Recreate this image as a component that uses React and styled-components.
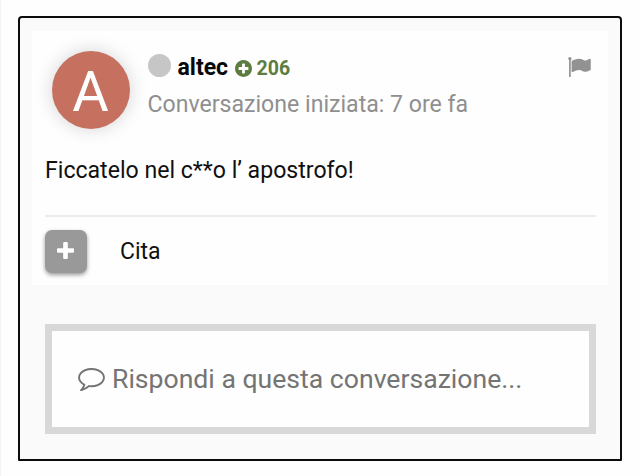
import React from 'react';
import styled, { createGlobalStyle } from 'styled-components';

const GlobalStyle = createGlobalStyle`
  * {
    box-sizing: border-box;
  }
  body {
    margin: 0;
    background: #fefefe;
    font-family: Roboto, 'Liberation Sans', sans-serif;
  }
`;

const Page = styled.main`
  height: 476px;
  padding: 16px 18px 15px 17px;
  border-left: 1px solid #f3f3f3;
`;

const Frame = styled.div`
  width: 604px;
  height: 445px;
  padding: 13px 12px 0;
  border: 2px solid #0c0c0c;
  border-radius: 4px 4px 1px 1px;
  background: #fafafa;
`;

const Card = styled.article`
  height: 254px;
  padding: 19px 12px 0 13px;
  background: #fefefe;
`;

const Header = styled.header`
  display: flex;
  align-items: flex-start;
  height: 80px;
`;

const Avatar = styled.div`
  display: flex;
  align-items: center;
  justify-content: center;
  width: 78px;
  height: 78px;
  margin: 0.5px 18px 0 6.5px;
  padding-top: 4px;
  border-radius: 50%;
  background: #c67060;
  color: #fff;
  font-size: 56px;
  line-height: 1;
  box-shadow: 0 0 18px rgba(0, 0, 0, 0.17);
`;

const Info = styled.div`
  flex: 1;
`;

const NameRow = styled.div`
  display: flex;
  align-items: center;
  height: 34px;
`;

const StatusDot = styled.span`
  width: 23px;
  height: 23px;
  margin: 0 7px 4px 0;
  border-radius: 50%;
  background: #c6c6c6;
`;

const UserName = styled.span`
  color: #080808;
  font-size: 23px;
  font-weight: 700;
`;

const Karma = styled.span`
  display: flex;
  align-items: center;
  gap: 5px;
  margin: 2px 0 0 6.5px;
  color: #5c7c40;
  font-size: 19.5px;
  font-weight: 700;
`;

const StartedAt = styled.div`
  margin-top: 7px;
  color: #8f8f8f;
  font-size: 23.1px;
  line-height: 27px;
  white-space: nowrap;
`;

const FlagButton = styled.button`
  display: flex;
  margin: 7px 5px 0 0;
  padding: 0;
  border: 0;
  background: none;
  color: #929292;
`;

const Message = styled.p`
  margin: 27px 0 0;
  color: #101010;
  font-size: 23.1px;
  line-height: 27px;
`;

const Actions = styled.footer`
  display: flex;
  align-items: center;
  gap: 33px;
  margin-top: 31px;
  padding-top: 13px;
  border-top: 2px solid #ececec;
  color: #101010;
  font-size: 23px;
`;

const VoteButton = styled.button`
  display: flex;
  align-items: center;
  justify-content: center;
  width: 42px;
  height: 43px;
  padding: 0 1px 3px 0;
  border: 0;
  border-radius: 7px;
  background: #999;
  color: #fff;
  box-shadow: 0 2px 4px rgba(0, 0, 0, 0.4);
`;

const ReplyBox = styled.div`
  display: flex;
  align-items: center;
  gap: 7px;
  height: 110px;
  margin: 39px 12px 0 13px;
  padding-left: 26px;
  border: 7px solid #d8d8d8;
  background: #fefefe;
  color: #747474;
  font-size: 26.6px;
  white-space: nowrap;
`;

const ReplyText = styled.span`
  padding-bottom: 2px;
`;

const icons = {
  flag: 'M320 256q0 72-64 110v1266q0 13-9.5 22.5t-22.5 9.5h-64q-13 0-22.5-9.5t-9.5-22.5v-1266q-64-38-64-110 0-53 37.5-90.5t90.5-37.5 90.5 37.5 37.5 90.5zm1472 64v763q0 25-12.5 38.5t-39.5 27.5q-215 116-369 116-61 0-123.5-22t-108.5-48-115.5-48-142.5-22q-192 0-464 146-17 9-33 9-26 0-45-19t-19-45v-742q0-32 31-55 21-14 79-43 236-120 421-120 107 0 200 29t219 88q38 19 88 19 54 0 117.5-21t110-47 88-47 54.5-21q26 0 45 19t19 45z',
  plus: 'M1600 736v192q0 40-28 68t-68 28h-416v416q0 40-28 68t-68 28h-192q-40 0-68-28t-28-68v-416h-416q-40 0-68-28t-28-68v-192q0-40 28-68t68-28h416v-416q0-40 28-68t68-28h192q40 0 68 28t28 68v416h416q40 0 68 28t28 68z',
  plusCircle: 'M1344 960v-128q0-26-19-45t-45-19h-256v-256q0-26-19-45t-45-19h-128q-26 0-45 19t-19 45v256h-256q-26 0-45 19t-19 45v128q0 26 19 45t45 19h256v256q0 26 19 45t45 19h128q26 0 45-19t19-45v-256h256q26 0 45-19t19-45zm320-64q0 209-103 385.5t-279.5 279.5-385.5 103-385.5-103-279.5-279.5-103-385.5 103-385.5 279.5-279.5 385.5-103 385.5 103 279.5 279.5 103 385.5z',
  comment: 'M896 384q-204 0-381.5 69.5t-282 187.5-104.5 255q0 112 71.5 213.5t201.5 175.5l87 50-27 96q-24 91-70 172 152-63 275-171l43-38 57 6q69 8 130 8 204 0 381.5-69.5t282-187.5 104.5-255-104.5-255-282-187.5-381.5-69.5zm896 512q0 174-120 321.5t-326 233-450 85.5q-70 0-145-8-198 175-460 242-49 14-114 22h-5q-15 0-27-10.5t-16-27.5v-1q-3-4-.5-12t2-10 4.5-9.5l6-9 7-8.5 8-9q7-8 31-34.5t34.5-38 31-39.5 32.5-51 27-59 26-76q-157-89-247.5-220t-90.5-281q0-174 120-321.5t326-233 450-85.5 450 85.5 326 233 120 321.5z',
};

const Icon = ({ name, width, height, viewBox }) => (
  <svg width={width} height={height} viewBox={viewBox} fill='currentColor' aria-hidden='true'>
    <path d={icons[name]} />
  </svg>
);

const App = () => {
  return (
    <Page>
      <GlobalStyle />
      <Frame>
        <Card>
          <Header>
            <Avatar>A</Avatar>
            <Info>
              <NameRow>
                <StatusDot />
                <UserName>altec</UserName>
                <Karma>
                  <Icon name='plusCircle' width={17} height={17} viewBox='128 128 1536 1536' />
                  206
                </Karma>
              </NameRow>
              <StartedAt>Conversazione iniziata: 7 ore fa</StartedAt>
            </Info>
            <FlagButton aria-label='Segnala'>
              <Icon name='flag' width={23} height={20} viewBox='64 128 1728 1536' />
            </FlagButton>
          </Header>

          <Message>Ficcatelo nel c**o l’ apostrofo!</Message>

          {/* voto e citazione */}
          <Actions>
            <VoteButton aria-label='Vota'>
              <Icon name='plus' width={17} height={17} viewBox='192 128 1408 1408' />
            </VoteButton>
            <span>Cita</span>
          </Actions>
        </Card>

        <ReplyBox>
          <Icon name='comment' width={27} height={23} viewBox='0 256 1792 1536' />
          <ReplyText>Rispondi a questa conversazione...</ReplyText>
        </ReplyBox>
      </Frame>
    </Page>
  );
};

export default App;
